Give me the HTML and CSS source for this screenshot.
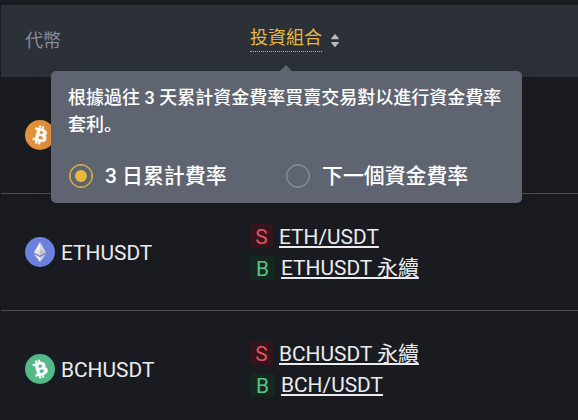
FILE: index.html
```html
<!DOCTYPE html>
<html lang="zh-Hant">
<head>
<meta charset="utf-8">
<title>資金費率套利</title>
<link rel="stylesheet" href="styles.css">
</head>
<body>
<main class="table">
  <header class="head">
    <div class="head-coin">代幣</div>
    <div class="head-portfolio">
      <span class="head-label">投資組合</span>
      <svg class="sort" width="8" height="14" viewBox="0 0 8 14"><path d="M4 0 7.7 4.2V5.2H.3V4.2ZM.3 8H7.7V9L4 13.2.3 9Z" fill="#b7bdc6"/></svg>
      <div class="tooltip">
        <p class="tip-text" lang="zh-Hans">根據過往 3 天累計資金費率買賣交易對以進行資金費率套利。</p>
        <div class="options">
          <label class="option"><span class="radio checked"></span><span>3 日累計費率</span></label>
          <label class="option"><span class="radio"></span><span>下一個資金費率</span></label>
        </div>
      </div>
    </div>
  </header>
  <section class="row">
    <div class="coin">
      <svg class="logo" viewBox="0 0 32 32"><circle cx="16" cy="16" r="16" fill="#e2923d"/><path fill="#fff" stroke="#fff" stroke-width=".5" d="M23.189 14.02c.314-2.096-1.283-3.223-3.465-3.975l.708-2.84-1.728-.43-.69 2.765c-.454-.114-.92-.22-1.385-.326l.695-2.783L15.596 6l-.708 2.839c-.376-.086-.746-.17-1.104-.26l.002-.009-2.384-.595-.46 1.846s1.283.294 1.256.312c.7.175.826.638.805 1.006l-.806 3.235c.048.012.11.03.18.057l-.183-.045-1.13 4.532c-.086.212-.303.531-.793.41.018.025-1.256-.313-1.256-.313l-.858 1.978 2.25.561c.418.105.828.215 1.231.318l-.715 2.872 1.727.43.708-2.84c.472.127.93.245 1.378.357l-.706 2.828 1.728.43.715-2.866c2.948.558 5.164.333 6.097-2.333.752-2.146-.037-3.385-1.588-4.192 1.13-.26 1.98-1.003 2.207-2.538zm-3.95 5.538c-.533 2.147-4.148.986-5.32.695l.95-3.805c1.172.293 4.929.872 4.37 3.11zm.535-5.569c-.487 1.953-3.495.96-4.47.717l.86-3.45c.975.243 4.118.696 3.61 2.733z"/></svg>
    </div>
  </section>
  <section class="row">
    <div class="coin">
      <svg class="logo" viewBox="0 0 30 30"><circle cx="15" cy="15" r="15" fill="#6b81dc"/><path d="M15 5 9 15.2 15 18.5Z" fill="#f1f1f3"/><path d="M15 5 21 15.2 15 18.5Z" fill="#d3d6df"/><path d="m9 15.2 6-2.6v5.9Z" fill="#dedede"/><path d="m21 15.2-6-2.6v5.9Z" fill="#bfc2ca"/><path d="m9 17 6 3.3V25Z" fill="#f1f1f3"/><path d="m21 17-6 3.3V25Z" fill="#d3d6df"/></svg>
      <span class="symbol">ETHUSDT</span>
    </div>
    <div class="pair">
      <div class="leg"><span class="tag sell">S</span><a class="link">ETH/USDT</a></div>
      <div class="leg"><span class="tag buy">B</span><a class="link">ETHUSDT 永續</a></div>
    </div>
  </section>
  <section class="row">
    <div class="coin">
      <svg class="logo" viewBox="0 0 32 32"><circle cx="16" cy="16" r="16" fill="#53b987"/><path fill="#fff" stroke="#fff" stroke-width=".4" transform="rotate(-28 16 16)" d="M23.189 14.02c.314-2.096-1.283-3.223-3.465-3.975l.708-2.84-1.728-.43-.69 2.765c-.454-.114-.92-.22-1.385-.326l.695-2.783L15.596 6l-.708 2.839c-.376-.086-.746-.17-1.104-.26l.002-.009-2.384-.595-.46 1.846s1.283.294 1.256.312c.7.175.826.638.805 1.006l-.806 3.235c.048.012.11.03.18.057l-.183-.045-1.13 4.532c-.086.212-.303.531-.793.41.018.025-1.256-.313-1.256-.313l-.858 1.978 2.25.561c.418.105.828.215 1.231.318l-.715 2.872 1.727.43.708-2.84c.472.127.93.245 1.378.357l-.706 2.828 1.728.43.715-2.866c2.948.558 5.164.333 6.097-2.333.752-2.146-.037-3.385-1.588-4.192 1.13-.26 1.98-1.003 2.207-2.538zm-3.95 5.538c-.533 2.147-4.148.986-5.32.695l.95-3.805c1.172.293 4.929.872 4.37 3.11zm.535-5.569c-.487 1.953-3.495.96-4.47.717l.86-3.45c.975.243 4.118.696 3.61 2.733z"/></svg>
      <span class="symbol">BCHUSDT</span>
    </div>
    <div class="pair">
      <div class="leg"><span class="tag sell">S</span><a class="link">BCHUSDT 永續</a></div>
      <div class="leg"><span class="tag buy">B</span><a class="link">BCH/USDT</a></div>
    </div>
  </section>
</main>
</body>
</html>
```
FILE: styles.css
```css
* { box-sizing: border-box; }

body {
  margin: 0;
  height: 420px;
  overflow: hidden;
  background: #1a1b20;
  color: #eaecef;
  font-family: Roboto, "Noto Sans CJK TC", sans-serif;
}

.table { padding: 5px 0 0 1px; }

.head,
.row {
  display: grid;
  grid-template-columns: 249px 1fr;
}

.head {
  height: 72px;
  background: #2c3138;
}

.head-coin {
  padding: 22px 0 0 24px;
  font-size: 18px;
  line-height: 27px;
  color: #848e9c;
}

.head-portfolio {
  position: relative;
  display: flex;
  align-items: flex-start;
  padding-top: 19px;
}

.head-label {
  height: 28px;
  font-size: 18px;
  line-height: 27px;
  color: #e8b73f;
  border-bottom: 1px dotted #aeb4bd;
}

.sort { margin: 10px 0 0 9px; }

.tooltip {
  position: absolute;
  z-index: 1;
  top: 66px;
  left: -199px;
  width: 471px;
  height: 132px;
  padding: 13px 17px;
  border-radius: 5px;
  background: #5f6570;
  color: #fff;
  font-weight: 500;
  box-shadow: 0 0 20px rgba(20, 21, 26, .12);
}

.tooltip::before {
  content: "";
  position: absolute;
  top: -6px;
  left: 229px;
  border: 6px solid transparent;
  border-top: 0;
  border-bottom-color: #5f6570;
}

.tip-text {
  margin: 0;
  font-family: Roboto, "Noto Sans CJK SC", sans-serif;
  font-size: 18px;
  line-height: 27px;
}

.options {
  display: grid;
  grid-template-columns: 217px 1fr;
  margin: 24px 0 0 1px;
}

.option {
  display: flex;
  align-items: center;
  gap: 12px;
  height: 28px;
  font-size: 20.9px;
  line-height: 28px;
  white-space: nowrap;
}

.radio {
  display: grid;
  place-items: center;
  width: 24px;
  height: 24px;
  border: 1px solid #8b909a;
  border-radius: 50%;
  box-shadow: inset 0 0 0 .5px #8b909a;
}

.radio.checked {
  border-color: #e8b73f;
  box-shadow: inset 0 0 0 .5px #e8b73f;
}

.radio.checked::before {
  content: "";
  width: 12px;
  height: 12px;
  border-radius: 50%;
  background: #e8b73f;
}

.row {
  height: 117px;
  border-bottom: 1px solid #4b4f55;
  font-size: 20.9px;
}

.coin {
  display: flex;
  align-items: center;
  gap: 6px;
  padding-left: 24px;
}

.symbol { padding-top: 2px; }

.logo {
  width: 30px;
  height: 30px;
}

.pair {
  display: flex;
  flex-direction: column;
  gap: 8px;
  padding-top: 30px;
}

.leg {
  display: flex;
  gap: 6px;
  height: 24px;
  line-height: 26px;
}

.tag {
  width: 23px;
  height: 24px;
  border-radius: 4px;
  text-align: center;
}

.sell {
  background: #35151d;
  color: #e4525f;
}

.buy {
  width: 25px;
  background: #152721;
  color: #56c687;
}

.link {
  text-decoration: underline;
  text-decoration-thickness: 2px;
  text-decoration-skip-ink: none;
  text-underline-offset: 2px;
  white-space: nowrap;
}

.buy + .link { line-height: 24px; }
```
